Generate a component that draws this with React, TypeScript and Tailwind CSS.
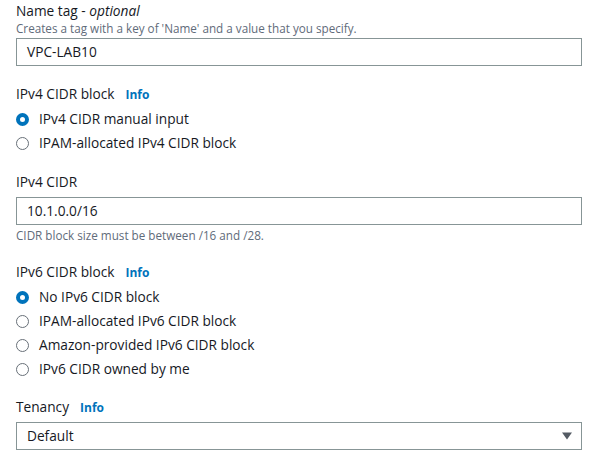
import React from "react";

function Radio({ label, checked }: { label: string; checked?: boolean }) {
  return (
    <label className="flex h-6 items-center gap-[10px]">
      <span
        className={
          checked
            ? "h-[13px] w-[13px] rounded-full border-[4px] border-[#0073bb] bg-white"
            : "h-[13px] w-[13px] rounded-full border border-[#687078] bg-white"
        }
      />
      <span className="text-[13.7px] text-[#16191f]">{label}</span>
    </label>
  );
}

function Label({ text, info, optional }: { text: string; info?: boolean; optional?: boolean }) {
  return (
    <div className="flex h-5 items-baseline gap-[11px] text-[13.7px] leading-5 text-[#16191f]">
      <span>
        {text}
        {optional && (
          <>
            {" - "}
            <i>optional</i>
          </>
        )}
      </span>
      {info && <span className="text-[12px] font-bold text-[#0073bb]">Info</span>}
    </div>
  );
}

function TextBox({ value }: { value: string }) {
  return (
    <div className="flex h-[28px] w-[566px] items-center border border-[#879596] px-[10px] text-[13.7px] text-[#16191f]">
      {value}
    </div>
  );
}

export default function App() {
  return (
    <div className="h-[458px] w-[615px] overflow-hidden bg-white pl-4 pt-[1px] font-['Open_Sans',sans-serif]">
      <Label text="Name tag" optional />
      <p className="mt-[-1px] h-4 text-[11.7px] leading-4 text-[#5f6b7a]">
        Creates a tag with a key of 'Name' and a value that you specify.
      </p>
      <div className="mt-[2px]">
        <TextBox value="VPC-LAB10" />
      </div>

      <div className="mt-[18px]">
        <Label text="IPv4 CIDR block" info />
      </div>
      <div className="mt-[3px] flex flex-col">
        <Radio label="IPv4 CIDR manual input" checked />
        <Radio label="IPAM-allocated IPv4 CIDR block" />
      </div>

      <div className="mt-[17px]">
        <Label text="IPv4 CIDR" />
      </div>
      <div className="mt-[5px]">
        <TextBox value="10.1.0.0/16" />
      </div>
      <p className="mt-[2px] h-4 text-[11.7px] leading-4 text-[#5f6b7a]">
        CIDR block size must be between /16 and /28.
      </p>

      <div className="mt-[19px]">
        <Label text="IPv6 CIDR block" info />
      </div>
      <div className="mt-[3px] flex flex-col">
        <Radio label="No IPv6 CIDR block" checked />
        <Radio label="IPAM-allocated IPv6 CIDR block" />
        <Radio label="Amazon-provided IPv6 CIDR block" />
        <Radio label="IPv6 CIDR owned by me" />
      </div>

      <div className="mt-[16px]">
        <Label text="Tenancy" info />
      </div>
      <div className="mt-[5px] flex h-[28px] w-[566px] items-center justify-between border border-[#879596] pl-[10px] pr-[8px] text-[13.7px] text-[#16191f]">
        <span>Default</span>
        <svg width="12" height="8" viewBox="0 0 12 8">
          <path d="M1 0.5 L11 0.5 L6 7.5 Z" fill="#545b64" />
        </svg>
      </div>
    </div>
  );
}
